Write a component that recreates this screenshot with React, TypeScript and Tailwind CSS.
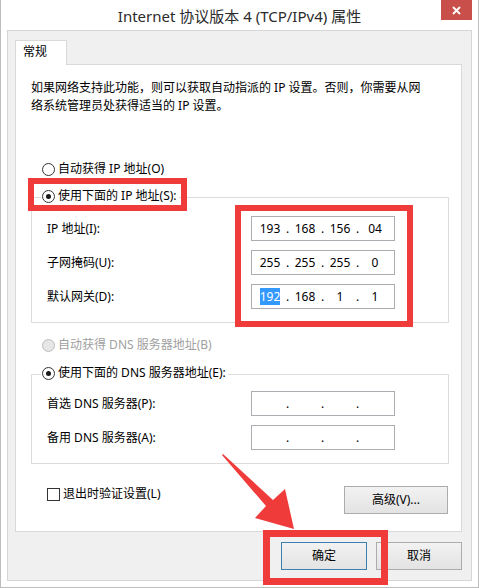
import React from "react";

const Radio = ({ checked, disabled }: { checked?: boolean; disabled?: boolean }) => (
  <span
    className={
      "flex items-center justify-center w-[13px] h-[13px] rounded-full border " +
      (disabled ? "border-[#bcbcbc] bg-[#e6e6e6]" : "border-[#333333] bg-white")
    }
  >
    {checked ? <span className="w-[5px] h-[5px] rounded-full bg-[#1a1a1a]" /> : null}
  </span>
);

const IpField = ({ parts, highlightFirst }: { parts: string[]; highlightFirst?: boolean }) => (
  <div className="flex items-center w-[144px] h-[25px] border border-[#abadb3] bg-white pl-[3px] text-[12px] text-black">
    {parts.map((p, i) => (
      <React.Fragment key={i}>
        <span className="w-[30px] text-center leading-[17px]">
          {i === 0 && highlightFirst ? <span className="bg-[#3399ff] text-white">{p}</span> : p}
        </span>
        {i < 3 ? <span className="w-[5px] text-center leading-[17px]">.</span> : null}
      </React.Fragment>
    ))}
  </div>
);

const FieldRow = ({ label, children }: { label: string; children: React.ReactNode }) => (
  <div className="flex items-center h-[25px] pl-[15px]">
    <span className="w-[204px] text-[12px] leading-[18px]">{label}</span>
    {children}
  </div>
);

export default function App() {
  return (
    <div className="relative w-[479px] h-[588px] bg-white border-x border-b border-[#bdbdbd] font-['Noto_Sans','Noto_Sans_CJK_SC',sans-serif] text-black overflow-hidden">
      {/* title bar */}
      <div className="grid grid-cols-[1fr_auto_1fr] h-[30px]">
        <div />
        <div className="text-[15px] leading-[32px] text-[#2b2b2b] whitespace-nowrap">
          Internet 协议版本 4 (TCP/IPv4) 属性
        </div>
        <div className="flex justify-end pr-[6px]">
          <div className="flex items-center justify-center w-[31px] h-[20px] bg-[#c9504a]">
            <svg width="9" height="9" viewBox="0 0 9 9">
              <path d="M1 1L8 8M8 1L1 8" stroke="white" strokeWidth="1.8" />
            </svg>
          </div>
        </div>
      </div>

      {/* body */}
      <div className="mx-[6px] h-[551px] border border-[#d6d6d6] bg-[#f0f0f0] pt-[9px] pl-[7px] pr-[9px]">
        <div className="flex">
          <div className="relative z-10 -mb-px h-[25px] w-[52px] border-x border-t border-[#d9d9d9] bg-white pl-[7px] text-[12px] leading-[22px]">
            常规
          </div>
        </div>
        <div className="h-[468px] border border-[#d9d9d9] bg-white text-[12px]">
          <p className="mt-[14px] pl-[15px] leading-[18px]">
            如果网络支持此功能，则可以获取自动指派的 IP 设置。否则，你需要从网
            <br />
            络系统管理员处获得适当的 IP 设置。
          </p>

          <div className="mt-[44px] ml-[26px] flex items-center gap-[3px] h-[20px] leading-[18px]">
            <Radio />
            <span>自动获得 IP 地址(O)</span>
          </div>

          <div className="mt-[18px] ml-[15px] w-[418px] border border-[#dcdcdc] pb-[13px]">
            <div className="-mt-[12px] ml-[9px] flex w-fit items-center gap-[3px] h-[20px] bg-white pl-[1px] pr-[2px] leading-[18px]">
              <Radio checked />
              <span>使用下面的 IP 地址(S):</span>
            </div>
            <div className="mt-[10px] flex flex-col gap-[9px]">
              <FieldRow label="IP 地址(I):">
                <IpField parts={["193", "168", "156", "04"]} />
              </FieldRow>
              <FieldRow label="子网掩码(U):">
                <IpField parts={["255", "255", "255", "0"]} />
              </FieldRow>
              <FieldRow label="默认网关(D):">
                <IpField parts={["192", "168", "1", "1"]} highlightFirst />
              </FieldRow>
            </div>
          </div>

          <div className="mt-[12px] ml-[26px] flex items-center gap-[3px] h-[20px] leading-[18px] text-[#a0a0a0]">
            <Radio disabled />
            <span>自动获得 DNS 服务器地址(B)</span>
          </div>

          <div className="mt-[19px] ml-[15px] w-[418px] border border-[#dcdcdc] pb-[13px]">
            <div className="-mt-[12px] ml-[9px] flex w-fit items-center gap-[3px] h-[20px] bg-white pl-[1px] pr-[2px] leading-[18px]">
              <Radio checked />
              <span>使用下面的 DNS 服务器地址(E):</span>
            </div>
            <div className="mt-[8px] flex flex-col gap-[9px]">
              <FieldRow label="首选 DNS 服务器(P):">
                <IpField parts={["", "", "", ""]} />
              </FieldRow>
              <FieldRow label="备用 DNS 服务器(A):">
                <IpField parts={["", "", "", ""]} />
              </FieldRow>
            </div>
          </div>

          <div className="mt-[20px] flex items-start justify-between">
            <div className="ml-[31px] flex items-center gap-[3px] h-[20px] leading-[18px]">
              <span className="w-[13px] h-[13px] border border-[#333333] bg-white" />
              <span>退出时验证设置(L)</span>
            </div>
            <div className="mt-[2px] mr-[13px] flex items-center justify-center w-[104px] h-[28px] border border-[#acacac] bg-gradient-to-b from-[#f2f2f2] to-[#e3e3e3]">
              高级(V)...
            </div>
          </div>
        </div>

        <div className="mt-[10px] flex justify-end gap-[9px] text-[12px]">
          <div className="flex items-center justify-center w-[86px] h-[28px] border border-[#3c7fb1] bg-gradient-to-b from-[#f2f2f2] to-[#e3e3e3]">
            确定
          </div>
          <div className="flex items-center justify-center w-[86px] h-[28px] border border-[#acacac] bg-gradient-to-b from-[#f2f2f2] to-[#e3e3e3]">
            取消
          </div>
        </div>
      </div>

      {/* red annotations */}
      <div className="absolute left-[27px] top-[178px] w-[159px] h-[33px] border-[6px] border-[#f03b3b] pointer-events-none" />
      <div className="absolute left-[234px] top-[205px] w-[178px] h-[122px] border-[6px] border-[#f03b3b] pointer-events-none" />
      <div className="absolute left-[262px] top-[530px] w-[125px] h-[55px] border-[7px] border-[#f03b3b] pointer-events-none" />
      <svg className="absolute left-0 top-0 pointer-events-none" width="479" height="588" viewBox="0 0 479 588">
        <polygon
          points="221,455 222,454 272,500 284,489 293,529 254,518 265,506"
          fill="#f03b3b"
        />
      </svg>
    </div>
  );
}
